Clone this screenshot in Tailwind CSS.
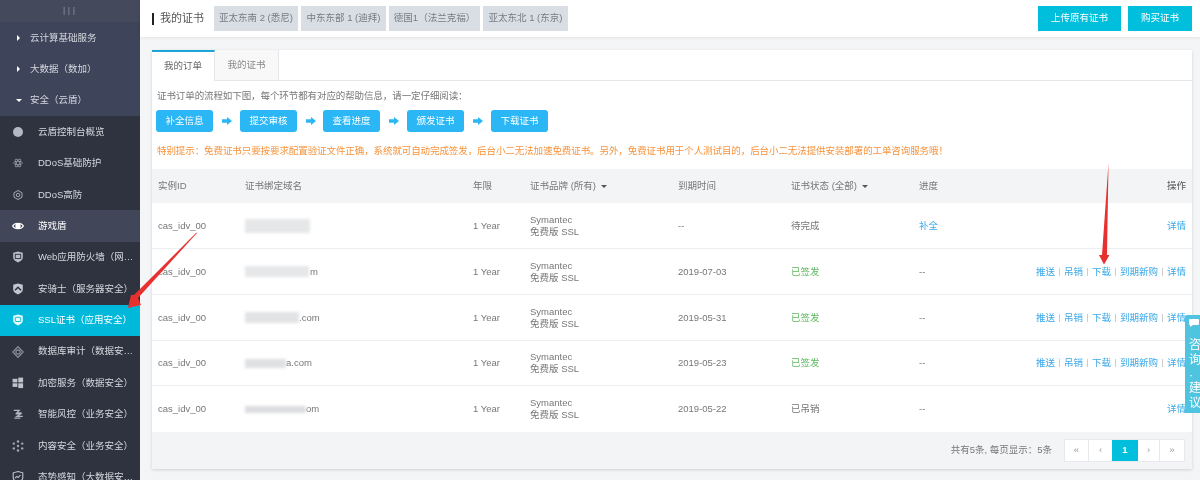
<!DOCTYPE html>
<html>
<head>
<meta charset="utf-8">
<script src="https://cdn.jsdelivr.net/npm/@tailwindcss/browser@4"></script>
</head>
<body class="m-0">
<div class="relative w-[1200px] h-[480px] overflow-hidden flex bg-[#f3f5f7] text-[9.5px] text-[#777] blur-[0.35px] font-['Liberation_Sans','Noto_Sans_CJK_SC',sans-serif]">

  <!-- Sidebar -->
  <aside class="w-[140px] h-[480px] shrink-0 overflow-hidden bg-[#2f323f] text-[#d5d8de]">
    <div class="h-[22px] bg-[#444a5c] flex items-center justify-center text-[10px] text-[#7f8492] tracking-[2px]">III</div>
    <div class="bg-[#3e4459]">
      <div class="h-[31.4px] flex items-center"><span class="ml-[17px] w-0 h-0 border-y-[3px] border-y-transparent border-l-[3px] border-l-white"></span><span class="ml-[10px]">云计算基础服务</span></div>
      <div class="h-[31.4px] flex items-center"><span class="ml-[17px] w-0 h-0 border-y-[3px] border-y-transparent border-l-[3px] border-l-white"></span><span class="ml-[10px]">大数据（数加）</span></div>
      <div class="h-[31.4px] flex items-center"><span class="ml-[16px] w-0 h-0 border-x-[3px] border-x-transparent border-t-[3px] border-t-white"></span><span class="ml-[8px]">安全（云盾）</span></div>
    </div>
    <div class="h-[31.4px] flex items-center">
      <span class="ml-[13px] w-[10px] h-[10px] rounded-full bg-[#b4b8c2]"></span><span class="ml-[15px]">云盾控制台概览</span>
    </div>
    <div class="h-[31.4px] flex items-center">
      <svg class="ml-[13px] w-[10px] h-[10px]" viewBox="0 0 20 20" fill="none" stroke="#9a9eaa" stroke-width="1.5"><ellipse cx="10" cy="10" rx="9" ry="3.5"/><ellipse cx="10" cy="10" rx="9" ry="3.5" transform="rotate(60 10 10)"/><ellipse cx="10" cy="10" rx="9" ry="3.5" transform="rotate(120 10 10)"/></svg><span class="ml-[15px]">DDoS基础防护</span>
    </div>
    <div class="h-[31.4px] flex items-center">
      <svg class="ml-[13px] w-[10px] h-[10px]" viewBox="0 0 20 20" fill="none" stroke="#a5a9b4" stroke-width="2"><path d="M10 1l8 4.5v9L10 19l-8-4.5v-9z"/><circle cx="10" cy="10" r="3.5"/></svg><span class="ml-[15px]">DDoS高防</span>
    </div>
    <div class="h-[31.4px] flex items-center bg-[#414659] text-white">
      <svg class="ml-[12px] w-[12px] h-[12px]" viewBox="0 0 20 20"><path d="M1 10c3-6 15-6 18 0-3 6-15 6-18 0z" fill="none" stroke="#fff" stroke-width="2"/><circle cx="10" cy="10" r="4.5" fill="#fff"/></svg><span class="ml-[14px]">游戏盾</span>
    </div>
    <div class="h-[31.4px] flex items-center">
      <svg class="ml-[12px] w-[12px] h-[12px]" viewBox="0 0 20 20"><path d="M10 1l8 2v8c0 4-4 6.500-8 8-4-1.500-8-4-8-8V3z" fill="#b9bcc5"/><rect x="5.500" y="5.500" width="9" height="7" fill="none" stroke="#2f323f" stroke-width="1.500"/></svg><span class="ml-[14px] whitespace-nowrap">Web应用防火墙（网…</span>
    </div>
    <div class="h-[31.4px] flex items-center">
      <svg class="ml-[12px] w-[12px] h-[12px]" viewBox="0 0 20 20"><path d="M10 1l8 2v8c0 4-4 6.500-8 8-4-1.500-8-4-8-8V3z" fill="#c4c7cf"/><path d="M5 12l5-5 5 5" fill="none" stroke="#2f323f" stroke-width="2.500"/></svg><span class="ml-[14px]">安骑士（服务器安全）</span>
    </div>
    <div class="h-[31.4px] flex items-center bg-[#00b8d9] text-white">
      <svg class="ml-[12px] w-[12px] h-[12px]" viewBox="0 0 20 20"><path d="M10 1l8 2v8c0 4-4 6.500-8 8-4-1.500-8-4-8-8V3z" fill="#e8fbff"/><rect x="5.500" y="5.500" width="9" height="7" rx="1" fill="none" stroke="#00b8d9" stroke-width="1.500"/></svg><span class="ml-[14px]">SSL证书（应用安全）</span>
    </div>
    <div class="h-[31.4px] flex items-center">
      <svg class="ml-[12px] w-[12px] h-[12px]" viewBox="0 0 20 20" fill="none" stroke="#8d919d" stroke-width="2"><path d="M10 1l8.500 9-8.500 9-8.500-9z"/><circle cx="10" cy="10" r="3.500"/></svg><span class="ml-[14px] whitespace-nowrap">数据库审计（数据安…</span>
    </div>
    <div class="h-[31.4px] flex items-center">
      <svg class="ml-[12px] w-[12px] h-[12px]" viewBox="0 0 20 20" fill="#c0c3cb"><rect x="1" y="3" width="8" height="6"/><rect x="10.500" y="1" width="8" height="8"/><rect x="1" y="10.500" width="8" height="6"/><rect x="10.500" y="10.500" width="8" height="8"/></svg><span class="ml-[14px]">加密服务（数据安全）</span>
    </div>
    <div class="h-[31.4px] flex items-center">
      <svg class="ml-[12px] w-[12px] h-[12px]" viewBox="0 0 20 20" fill="none" stroke="#b0b3bd" stroke-width="2"><path d="M3 4h9l-4 4h8M6 10h8l-6 4h10M4 17h10"/></svg><span class="ml-[14px]">智能风控（业务安全）</span>
    </div>
    <div class="h-[31.4px] flex items-center">
      <svg class="ml-[12px] w-[12px] h-[12px]" viewBox="0 0 20 20" fill="#a5a9b4"><circle cx="10" cy="2.500" r="2"/><circle cx="10" cy="17.500" r="2"/><circle cx="3" cy="6" r="2"/><circle cx="17" cy="6" r="2"/><circle cx="3" cy="14" r="2"/><circle cx="17" cy="14" r="2"/><circle cx="10" cy="10" r="2"/></svg><span class="ml-[14px]">内容安全（业务安全）</span>
    </div>
    <div class="h-[31.4px] flex items-center">
      <svg class="ml-[12px] w-[12px] h-[12px]" viewBox="0 0 20 20" fill="none" stroke="#c4c7cf" stroke-width="1.800"><path d="M10 1l8 2v8c0 4-4 6.500-8 8-4-1.500-8-4-8-8V3z"/><path d="M5 12l3-3 2 2 4-4"/></svg><span class="ml-[14px] whitespace-nowrap">态势感知（大数据安…</span>
    </div>
  </aside>

  <!-- Main -->
  <main class="flex-1 min-w-0 flex flex-col">
    <header class="h-[37px] shrink-0 bg-white flex items-center pl-[12px] pr-[8px] shadow-[0_1px_3px_rgba(0,0,0,0.08)]">
      <span class="w-[2px] h-[12px] bg-[#222]"></span>
      <span class="ml-[6px] text-[11px] text-[#555]">我的证书</span>
      <div class="ml-[10px] flex gap-[3px]">
        <span class="w-[84px] h-[25px] flex items-center justify-center bg-[#d9dee5] text-[#777b83]">亚太东南 2 (悉尼)</span>
        <span class="w-[85px] h-[25px] flex items-center justify-center bg-[#d9dee5] text-[#777b83]">中东东部 1 (迪拜)</span>
        <span class="w-[91px] h-[25px] flex items-center justify-center bg-[#d9dee5] text-[#777b83]">德国1（法兰克福）</span>
        <span class="w-[85px] h-[25px] flex items-center justify-center bg-[#d9dee5] text-[#777b83]">亚太东北 1 (东京)</span>
      </div>
      <div class="ml-auto flex gap-[7px]">
        <span class="w-[83px] h-[25px] flex items-center justify-center bg-[#00bfdc] text-white">上传原有证书</span>
        <span class="w-[64px] h-[25px] flex items-center justify-center bg-[#00bfdc] text-white">购买证书</span>
      </div>
    </header>

    <section class="mt-[13px] ml-[12px] mr-[8px] h-[419px] bg-white shadow-[0_1px_3px_rgba(0,0,0,0.15)] flex flex-col">
      <div class="h-[31px] shrink-0 flex border-b border-[#e4e6ea]">
        <div class="w-[63px] h-[31px] bg-white border-t-2 border-t-[#1ba6d6] border-r border-r-[#e4e6ea] flex items-center justify-center text-[#666]">我的订单</div>
        <div class="w-[64px] h-[30px] bg-[#f8f8f8] border-r border-r-[#e4e6ea] flex items-center justify-center text-[#888]">我的证书</div>
      </div>

      <div class="h-[29px] shrink-0 pl-[5px] flex items-center pt-[2px] tracking-[-0.09px]">证书订单的流程如下图，每个环节都有对应的帮助信息，请一定仔细阅读：</div>

      <div class="h-[22px] shrink-0 ml-[4px] flex items-center">
        <span class="w-[57px] h-[22px] rounded-[3px] bg-[#2bb6f6] text-white flex items-center justify-center">补全信息</span>
        <svg class="w-[27px] h-[10px]" viewBox="0 0 27 10"><path d="M9 3.200h5V1l5 4-5 4V6.800H9z" fill="#2bb6f6"/></svg>
        <span class="w-[57px] h-[22px] rounded-[3px] bg-[#2bb6f6] text-white flex items-center justify-center">提交审核</span>
        <svg class="w-[26px] h-[10px]" viewBox="0 0 26 10"><path d="M9 3.200h5V1l5 4-5 4V6.800H9z" fill="#2bb6f6"/></svg>
        <span class="w-[57px] h-[22px] rounded-[3px] bg-[#2bb6f6] text-white flex items-center justify-center">查看进度</span>
        <svg class="w-[27px] h-[10px]" viewBox="0 0 27 10"><path d="M9 3.200h5V1l5 4-5 4V6.800H9z" fill="#2bb6f6"/></svg>
        <span class="w-[57px] h-[22px] rounded-[3px] bg-[#2bb6f6] text-white flex items-center justify-center">颁发证书</span>
        <svg class="w-[27px] h-[10px]" viewBox="0 0 27 10"><path d="M9 3.200h5V1l5 4-5 4V6.800H9z" fill="#2bb6f6"/></svg>
        <span class="w-[57px] h-[22px] rounded-[3px] bg-[#2bb6f6] text-white flex items-center justify-center">下载证书</span>
      </div>

      <div class="h-[37px] shrink-0 pl-[5px] pt-[2px] flex items-center whitespace-nowrap text-[#f7923a] tracking-[-0.085px]">特别提示：免费证书只要按要求配置验证文件正确，系统就可自动完成签发，后台小二无法加速免费证书。另外，免费证书用于个人测试目的，后台小二无法提供安装部署的工单咨询服务哦！</div>

      <!-- Table -->
      <div class="h-[34px] shrink-0 bg-[#f3f4f6] pl-[6px] pr-[6px] grid grid-cols-[87px_228px_57px_148px_113px_128px_1fr] items-center">
        <span>实例ID</span><span>证书绑定域名</span><span>年限</span>
        <span class="flex items-center">证书品牌 (所有)<i class="ml-[5px] w-0 h-0 border-x-[3px] border-x-transparent border-t-[3px] border-t-[#555]"></i></span>
        <span>到期时间</span>
        <span class="flex items-center">证书状态 (全部)<i class="ml-[5px] w-0 h-0 border-x-[3px] border-x-transparent border-t-[3px] border-t-[#555]"></i></span>
        <span class="flex"><span>进度</span><span class="ml-auto text-[#555]">操作</span></span>
      </div>

      <div class="h-[46px] shrink-0 border-b border-[#eceef1] pl-[6px] pr-[6px] grid grid-cols-[87px_228px_57px_148px_113px_128px_1fr] items-center leading-[12px]">
        <span>cas_idv_00</span>
        <span class="flex items-center"><i class="w-[65px] h-[14px] bg-[#e6e7e9] blur-[1.5px]"></i></span>
        <span>1 Year</span><span>Symantec<br>免费版 SSL</span><span>--</span><span>待完成</span>
        <span class="flex"><span class="text-[#39a8e8]">补全</span><span class="ml-auto text-[#39a8e8]">详情</span></span>
      </div>
      <div class="h-[46px] shrink-0 border-b border-[#eceef1] pl-[6px] pr-[6px] grid grid-cols-[87px_228px_57px_148px_113px_128px_1fr] items-center leading-[12px]">
        <span>cas_idv_00</span>
        <span class="flex items-center"><i class="w-[64px] h-[11px] bg-[#e6e7e9] blur-[1.5px]"></i><span class="ml-px">m</span></span>
        <span>1 Year</span><span>Symantec<br>免费版 SSL</span><span>2019-07-03</span><span class="text-[#5cb85c]">已签发</span>
        <span class="flex items-center"><span>--</span><span class="ml-auto flex items-center gap-[4px] text-[#39a8e8] whitespace-nowrap"><span>推送</span><i class="w-px h-[8px] bg-[#ccc]"></i><span>吊销</span><i class="w-px h-[8px] bg-[#ccc]"></i><span>下载</span><i class="w-px h-[8px] bg-[#ccc]"></i><span>到期新购</span><i class="w-px h-[8px] bg-[#ccc]"></i><span>详情</span></span></span>
      </div>
      <div class="h-[46px] shrink-0 border-b border-[#eceef1] pl-[6px] pr-[6px] grid grid-cols-[87px_228px_57px_148px_113px_128px_1fr] items-center leading-[12px]">
        <span>cas_idv_00</span>
        <span class="flex items-center"><i class="w-[54px] h-[11px] bg-[#e2e3e5] blur-[1.5px]"></i><span>.com</span></span>
        <span>1 Year</span><span>Symantec<br>免费版 SSL</span><span>2019-05-31</span><span class="text-[#5cb85c]">已签发</span>
        <span class="flex items-center"><span>--</span><span class="ml-auto flex items-center gap-[4px] text-[#39a8e8] whitespace-nowrap"><span>推送</span><i class="w-px h-[8px] bg-[#ccc]"></i><span>吊销</span><i class="w-px h-[8px] bg-[#ccc]"></i><span>下载</span><i class="w-px h-[8px] bg-[#ccc]"></i><span>到期新购</span><i class="w-px h-[8px] bg-[#ccc]"></i><span>详情</span></span></span>
      </div>
      <div class="h-[45px] shrink-0 border-b border-[#eceef1] pl-[6px] pr-[6px] grid grid-cols-[87px_228px_57px_148px_113px_128px_1fr] items-center leading-[12px]">
        <span>cas_idv_00</span>
        <span class="flex items-center"><i class="w-[41px] h-[9px] bg-[#dfe0e2] blur-[1.5px]"></i><span>a.com</span></span>
        <span>1 Year</span><span>Symantec<br>免费版 SSL</span><span>2019-05-23</span><span class="text-[#5cb85c]">已签发</span>
        <span class="flex items-center"><span>--</span><span class="ml-auto flex items-center gap-[4px] text-[#39a8e8] whitespace-nowrap"><span>推送</span><i class="w-px h-[8px] bg-[#ccc]"></i><span>吊销</span><i class="w-px h-[8px] bg-[#ccc]"></i><span>下载</span><i class="w-px h-[8px] bg-[#ccc]"></i><span>到期新购</span><i class="w-px h-[8px] bg-[#ccc]"></i><span>详情</span></span></span>
      </div>
      <div class="h-[46px] shrink-0 pl-[6px] pr-[6px] grid grid-cols-[87px_228px_57px_148px_113px_128px_1fr] items-center leading-[12px]">
        <span>cas_idv_00</span>
        <span class="flex items-center"><i class="w-[61px] h-[7px] bg-[#dcdde0] blur-[1.5px]"></i><span>om</span></span>
        <span>1 Year</span><span>Symantec<br>免费版 SSL</span><span>2019-05-22</span><span>已吊销</span>
        <span class="flex items-center"><span>--</span><span class="ml-auto text-[#39a8e8]">详情</span></span>
      </div>

      <div class="flex-1 bg-[#f3f4f6] flex items-center justify-end pr-[7px]">
        <span class="mr-[12px]">共有5条, 每页显示：5条</span>
        <div class="flex h-[23px] bg-white border border-[#e7e9ec] text-[#999]">
          <span class="w-[24px] flex items-center justify-center border-r border-[#e7e9ec]">«</span>
          <span class="w-[23px] flex items-center justify-center">‹</span>
          <span class="w-[26px] flex items-center justify-center bg-[#00bfdc] text-white font-bold">1</span>
          <span class="w-[22px] flex items-center justify-center border-r border-[#e7e9ec]">›</span>
          <span class="w-[24px] flex items-center justify-center">»</span>
        </div>
      </div>
    </section>
  </main>

  <!-- Floating feedback -->
  <div class="absolute left-[1185px] top-[315px] w-[15px] h-[98px] overflow-hidden bg-[#4fc4df] text-white text-[12px] leading-[15px] pl-[4px] pt-[4px] whitespace-nowrap rounded-tl-[2px]">
    <svg class="w-[10px] h-[8px] mb-[11px]" viewBox="0 0 10 8"><path d="M0 1a1 1 0 011-1h8a1 1 0 011 1v4a1 1 0 01-1 1H4L1 8V6a1 1 0 01-1-1z" fill="#fff"/></svg>
    <div>咨</div><div>询</div><div class="h-[13px]">·</div><div>建</div><div>议</div>
  </div>

  <!-- Red annotation arrows -->
  <svg class="absolute left-0 top-0 pointer-events-none" width="1200" height="480" viewBox="0 0 1200 480">
    <path d="M197 233 L138 298 L141 305 L128 308 L131 295 L134 295 L196.500 232.500 Z" fill="#e8302e"/>
    <path d="M1108.500 163 L1107 255 L1109.500 255 L1104 264.500 L1099 255 L1102 255 Z" fill="#e8302e"/>
  </svg>
</div>
</body>
</html>
